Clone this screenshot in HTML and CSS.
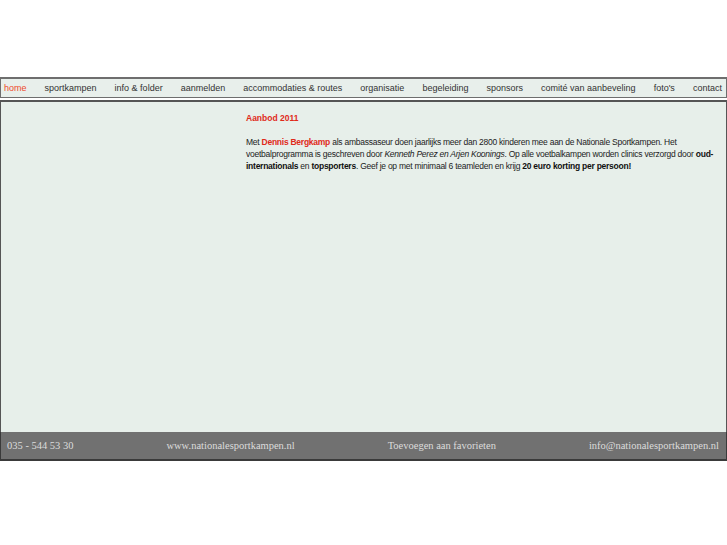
FILE: index.html
```html
<!DOCTYPE html>
<html lang="nl">
<head>
<meta charset="utf-8">
<title>Nationale Sportkampen</title>
<link rel="stylesheet" href="styles.css">
</head>
<body>
<div class="page">
  <nav class="nav">
    <a class="nav-item active" href="#">home</a>
    <a class="nav-item" href="#">sportkampen</a>
    <a class="nav-item" href="#">info &amp; folder</a>
    <a class="nav-item" href="#">aanmelden</a>
    <a class="nav-item" href="#">accommodaties &amp; routes</a>
    <a class="nav-item" href="#">organisatie</a>
    <a class="nav-item" href="#">begeleiding</a>
    <a class="nav-item" href="#">sponsors</a>
    <a class="nav-item" href="#">comité van aanbeveling</a>
    <a class="nav-item" href="#">foto's</a>
    <a class="nav-item" href="#">contact</a>
  </nav>
  <main class="content">
    <div class="article">
      <h1 class="title">Aanbod 2011</h1>
      <p class="text">Met <strong class="red">Dennis Bergkamp</strong> als ambassaseur doen jaarlijks meer dan 2800 kinderen mee aan de Nationale Sportkampen. Het voetbalprogramma is geschreven door <em>Kenneth Perez en Arjen Koonings</em>. Op alle voetbalkampen worden clinics verzorgd door <strong>oud-internationals</strong> en <strong>topsporters</strong>. Geef je op met minimaal 6 teamleden en krijg <strong>20 euro korting per persoon!</strong></p>
    </div>
  </main>
  <footer class="footer">
    <span>035 - 544 53 30</span>
    <span>www.nationalesportkampen.nl</span>
    <span>Toevoegen aan favorieten</span>
    <span>info@nationalesportkampen.nl</span>
  </footer>
</div>
</body>
</html>
```

FILE: styles.css
```css
html, body {
  margin: 0;
  padding: 0;
  background: #ffffff;
}

.page {
  width: 727px;
  margin-top: 77px;
  font-family: "Liberation Sans", Arial, sans-serif;
}

.nav {
  display: flex;
  justify-content: space-between;
  align-items: center;
  height: 18px;
  padding: 0 4px 0 3px;
  background: #e8efeb;
  border: 1px solid #6e6e6e;
  border-width: 2px 1px 1px 1px;
}

.nav-item {
  font-size: 9px;
  line-height: 16px;
  color: #333333;
  text-decoration: none;
  white-space: nowrap;
}

.nav-item.active {
  color: #ee4a2c;
}

.content {
  margin-top: 2px;
  height: 330px;
  background: #e7efea;
  border: 1px solid #555555;
  border-width: 2px 1px 0 1px;
  display: flex;
}

.article {
  margin-left: 245px;
  width: 474px;
  padding-top: 10px;
  font-size: 8.5px;
  line-height: 12px;
  color: #222222;
}

.title {
  margin: 0 0 12px 0;
  font-size: 8.5px;
  line-height: 12px;
  font-weight: bold;
  color: #e02a1a;
}

.text {
  margin: 0;
  letter-spacing: -0.25px;
}

.text strong {
  color: #111111;
}

.text .red {
  color: #e02a1a;
}

.footer {
  display: flex;
  justify-content: space-between;
  align-items: center;
  height: 27px;
  padding: 0 7px 0 6px;
  background: #717171;
  border: 1px solid #3a3a3a;
  border-width: 0 1px 2px 1px;
  font-family: "Liberation Serif", "Times New Roman", serif;
  font-size: 10.5px;
  color: #dcdcdc;
}
```
